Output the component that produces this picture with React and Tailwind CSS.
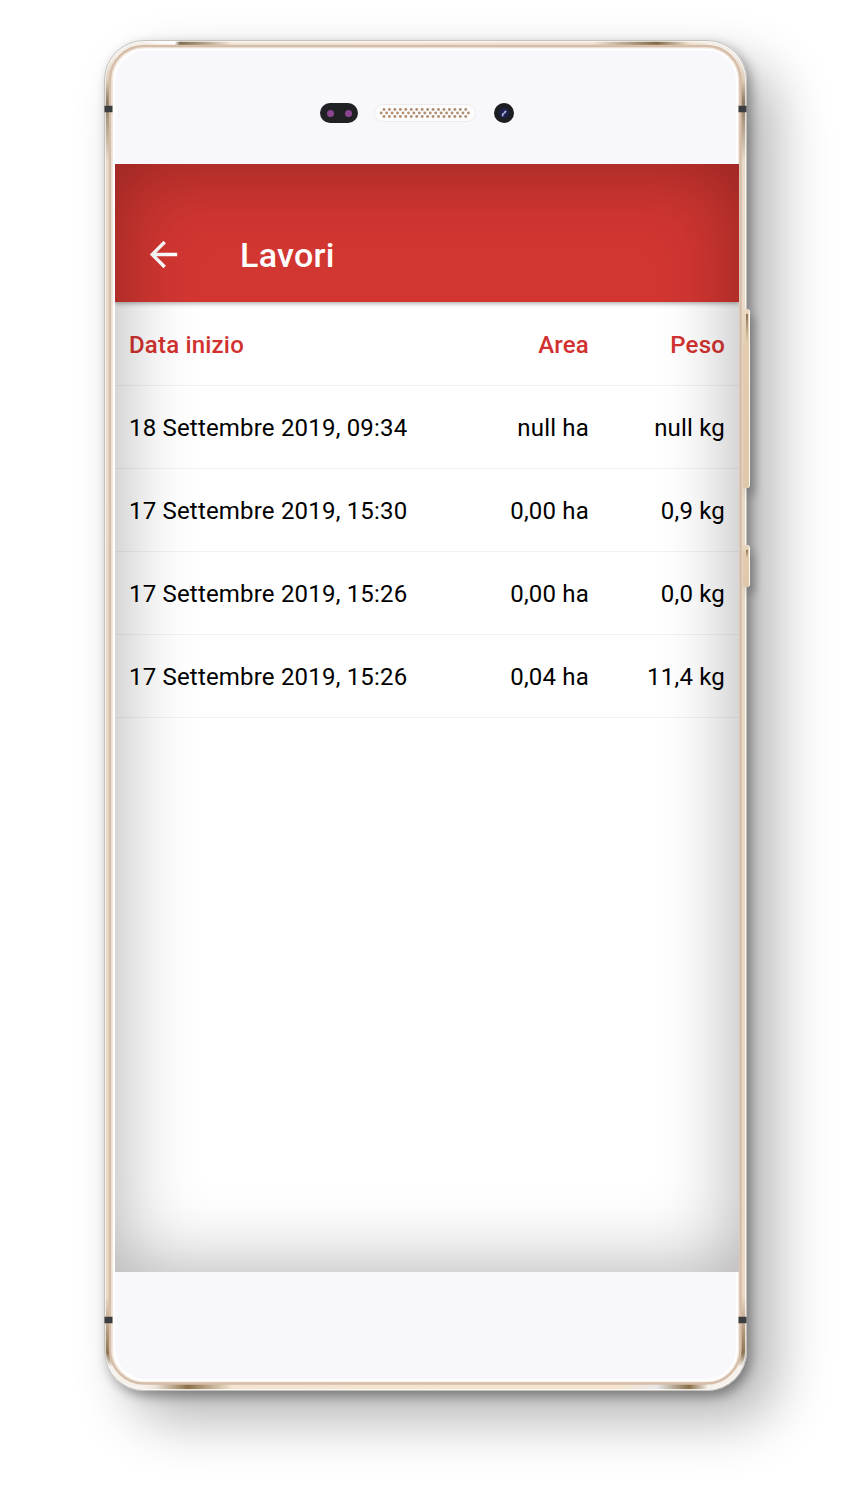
import React from "react";

const jobs = [
  { date: "18 Settembre 2019, 09:34", area: "null ha", weight: "null kg" },
  { date: "17 Settembre 2019, 15:30", area: "0,00 ha", weight: "0,9 kg" },
  { date: "17 Settembre 2019, 15:26", area: "0,00 ha", weight: "0,0 kg" },
  { date: "17 Settembre 2019, 15:26", area: "0,04 ha", weight: "11,4 kg" },
];

// Metal ring around the phone, with highlights in the corners
const PhoneFrame = () => (
  <svg
    className="absolute top-0 left-0 pointer-events-none"
    width="643"
    height="1351"
    viewBox="0 0 643 1351"
    fill="none"
  >
    <defs>
      <linearGradient id="side" x1="0" y1="0" x2="0" y2="1351" gradientUnits="userSpaceOnUse">
        <stop offset="0.012" stopColor="#f4eee8" />
        <stop offset="0.03" stopColor="#dccbb6" />
        <stop offset="0.046" stopColor="#8d7b62" />
        <stop offset="0.06" stopColor="#ab9a83" />
        <stop offset="0.09" stopColor="#e9dbcb" />
        <stop offset="0.93" stopColor="#ead8c4" />
        <stop offset="0.955" stopColor="#b39c7e" />
        <stop offset="0.972" stopColor="#8b7352" />
        <stop offset="0.982" stopColor="#f6f1eb" />
      </linearGradient>
      <linearGradient id="top" x1="0" y1="0" x2="643" y2="0" gradientUnits="userSpaceOnUse">
        <stop offset="0.06" stopColor="#f4eee8" />
        <stop offset="0.11" stopColor="#ffffff" />
        <stop offset="0.118" stopColor="#7f6c51" />
        <stop offset="0.15" stopColor="#a8977c" />
        <stop offset="0.2" stopColor="#f2e8dc" />
        <stop offset="0.76" stopColor="#f0e5d8" />
        <stop offset="0.86" stopColor="#7f6846" />
        <stop offset="0.91" stopColor="#f0e3d0" />
        <stop offset="0.94" stopColor="#f4eee8" />
      </linearGradient>
      <linearGradient id="bottom" x1="0" y1="0" x2="643" y2="0" gradientUnits="userSpaceOnUse">
        <stop offset="0.06" stopColor="#f6f1eb" />
        <stop offset="0.08" stopColor="#eee5da" />
        <stop offset="0.13" stopColor="#8c7148" />
        <stop offset="0.2" stopColor="#f3e5d2" />
        <stop offset="0.8" stopColor="#f5e3cd" />
        <stop offset="0.86" stopColor="#e8e8e8" />
        <stop offset="0.91" stopColor="#8a6f49" />
        <stop offset="0.94" stopColor="#f6f1eb" />
      </linearGradient>
    </defs>
    <rect x="10" y="9" width="623.5" height="1331.5" rx="31" stroke="#ffffff" strokeWidth="3" />
    <rect x="8" y="7.5" width="627" height="1335" rx="33" stroke="#f2e8df" strokeWidth="2" />
    <rect x="3.5" y="3.5" width="636" height="1344" rx="37" stroke="url(#side)" strokeWidth="5" />
    <path d="M40 3.5H603" stroke="url(#top)" strokeWidth="5" />
    <path d="M40 1346.5H603" stroke="url(#bottom)" strokeWidth="6" />
    <rect x="6" y="6" width="630.5" height="1337.5" rx="34" stroke="#d5bda8" strokeWidth="2.4" />
    <rect x="1.5" y="1.5" width="640" height="1348" rx="38.5" stroke="#ffffff" strokeOpacity="0.7" />
    <rect x="0.5" y="0.5" width="642" height="1350" rx="39.5" stroke="#c4c1bd" />
    {/* Antenna breaks */}
    <path d="M0.5 69H8.5M634.5 69H642.5M0.5 1280H8.5M634.5 1280H642.5" stroke="#3b3d3e" strokeWidth="6.5" />
  </svg>
);

const SideButton = ({ className }) => (
  <>
    <div
      className={`absolute left-[641px] w-[5px] rounded-r-[3px] shadow-[4px_7px_8px_rgba(0,0,0,0.3)] ${className}`}
    />
    <div
      className={`absolute z-10 left-[639px] w-[7px] rounded-r-[3px] border-r-[1.5px] border-[#fdf8f0] bg-linear-to-b from-[#ead7bf] from-2% via-[#e3cdae] via-20% to-[#dfc8a9] ${className}`}
    >
      <div className="ml-[3px] mt-[5px] h-[28px] max-h-[20%] w-[2px] bg-linear-to-b from-[#8d7056] to-transparent" />
    </div>
  </>
);

// Three rows of holes, the middle one is offset by half a step
const holes = [
  { y: 5.5, x: 10, count: 16 },
  { y: 9, x: 7.2, count: 17 },
  { y: 12.5, x: 10, count: 16 },
];

const Speaker = () => (
  <svg width="102" height="18" viewBox="0 0 102 18">
    <rect x="0.5" y="0.5" width="101" height="17" rx="8.5" fill="#fdfcfc" stroke="#edebeb" />
    {holes.map((row) =>
      Array.from({ length: row.count }, (_, i) => (
        <circle key={`${row.y}-${i}`} cx={row.x + i * 5.45} cy={row.y} r="1.45" fill="#b08f73" />
      ))
    )}
  </svg>
);

const TopBezel = () => (
  <div className="h-[124px] pt-[63px] pl-[216px] flex items-start">
    <div className="w-[38px] h-[20px] rounded-full bg-[#202124] flex items-center justify-center gap-[11px]">
      <span className="w-[7px] h-[7px] rounded-full bg-[#8b458e]" />
      <span className="w-[7px] h-[7px] rounded-full bg-[#8b458e]" />
    </div>
    <div className="ml-[16px] mt-[1px]">
      <Speaker />
    </div>
    <svg className="ml-[18px]" width="20" height="20" viewBox="0 0 20 20">
      <circle cx="10" cy="10" r="10" fill="#1d1e22" />
      <circle cx="10" cy="10" r="5" fill="#20204f" />
      <path d="M8.6 12.6L9 10.8M10.4 9.8L11.6 8.4" stroke="#aab2d6" strokeWidth="1.8" strokeLinecap="round" />
    </svg>
  </div>
);

const AppBar = () => (
  <div className="h-[138px] pt-[44px] pl-[28px] flex items-center bg-[#d23631] text-white shadow-[0_1px_5px_rgba(0,0,0,0.4)] relative">
    <svg className="-mt-[2px]" width="41" height="41" viewBox="0 0 24 24" fill="currentColor">
      <path d="M20 11H7.83l5.59-5.59L12 4l-8 8 8 8 1.41-1.41L7.83 13H20v-2z" />
    </svg>
    <h1 className="ml-[56px] text-[34px] leading-[40px] font-medium tracking-[0.3px]">Lavori</h1>
  </div>
);

const JobRow = ({ date, area, weight, header }) => (
  <div
    className={`h-[83px] px-[14px] pt-[2px] flex items-center border-b border-[#f3f3f3] text-[24px] tracking-[0.19px] ${
      header ? "font-medium text-[#d2322f]" : "text-black"
    }`}
  >
    <span className="flex-1">{date}</span>
    <span className="w-[120px] text-right">{area}</span>
    <span className="w-[136px] text-right">{weight}</span>
  </div>
);

const App = () => {
  return (
    <div className="h-[1489px] w-[850px] overflow-hidden bg-white pt-[40px] pl-[104px] font-['Roboto',sans-serif]">
      <div className="relative w-[643px] h-[1351px]">
        <div className="relative w-full h-full rounded-[40px] bg-[#f8f8fc] shadow-[28px_28px_56px_rgba(0,0,0,0.3),4px_5px_12px_rgba(0,0,0,0.36)]">
          <PhoneFrame />
          <TopBezel />
          <div className="relative ml-[11px] w-[624px] h-[1108px] bg-white overflow-hidden">
            <AppBar />
            <div className="pt-px">
              <JobRow header date="Data inizio" area="Area" weight="Peso" />
              {jobs.map((job, i) => (
                <JobRow key={i} {...job} />
              ))}
            </div>
            {/* Vignette over the whole screen */}
            <div className="absolute inset-0 pointer-events-none shadow-[inset_0_0_80px_rgba(10,0,0,0.33)]" />
          </div>
        </div>
        <SideButton className="top-[269px] h-[179px]" />
        <SideButton className="top-[505px] h-[42px]" />
      </div>
    </div>
  );
};

export default App;
